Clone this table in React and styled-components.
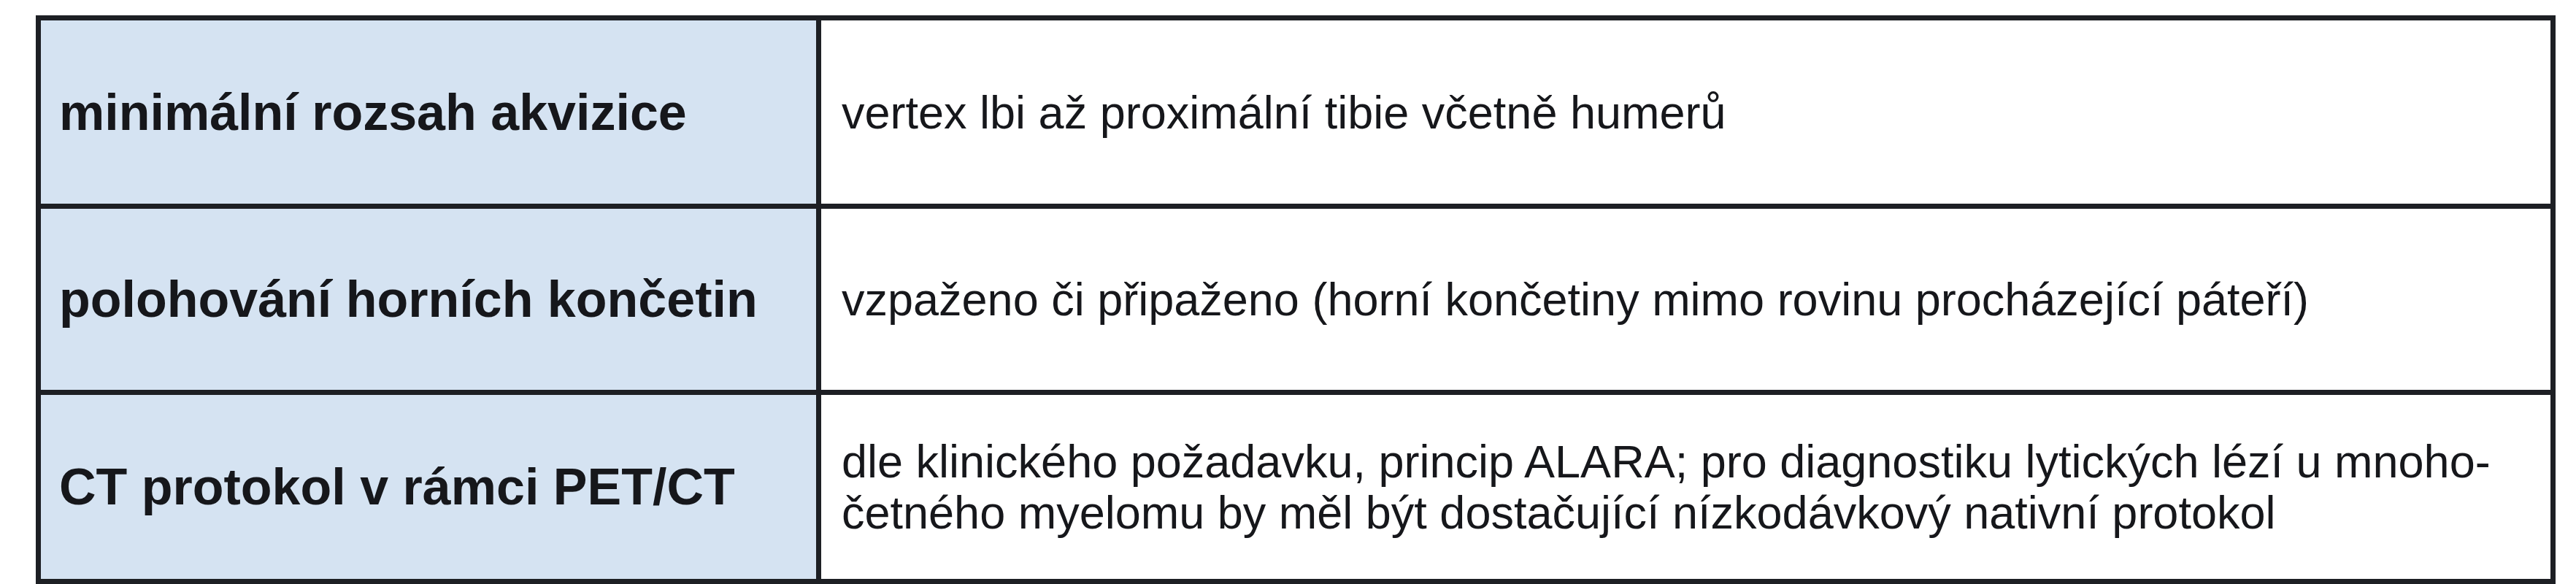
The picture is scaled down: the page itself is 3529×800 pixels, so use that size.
import React from 'react';
import styled, { createGlobalStyle } from 'styled-components';

const GlobalStyle = createGlobalStyle`
  html, body {
    margin: 0;
    padding: 0;
    background: #ffffff;
  }
  body {
    font-family: "Liberation Sans", Arial, sans-serif;
    color: #16171b;
  }
`;

const Page = styled.div`
  padding: 21px 0 0 49px;
  width: 3529px;
  height: 800px;
  box-sizing: border-box;
  overflow: hidden;
`;

const Table = styled.div`
  display: grid;
  grid-template-columns: 1062px 2369px;
  grid-template-rows: 251px 248px 252px;
  gap: 7px;
  padding: 7px;
  width: 3452px;
  box-sizing: border-box;
  background: #1d1f24;
`;

const Cell = styled.div`
  display: flex;
  align-items: center;
  box-sizing: border-box;
  background: ${(p) => (p.$head ? '#d5e3f2' : '#ffffff')};
  padding-left: ${(p) => (p.$head ? '25px' : '28px')};
  font-size: ${(p) => (p.$head ? '70px' : '63px')};
  font-weight: ${(p) => (p.$head ? 700 : 400)};
  line-height: 70px;
  white-space: nowrap;
`;

const rows = [
  {
    label: 'minimální rozsah akvizice',
    value: ['vertex lbi až proximální tibie včetně humerů'],
  },
  {
    label: 'polohování horních končetin',
    value: ['vzpaženo či připaženo (horní končetiny mimo rovinu procházející páteří)'],
  },
  {
    label: 'CT protokol v rámci PET/CT',
    value: [
      'dle klinického požadavku, princip ALARA; pro diagnostiku lytických lézí u mnoho-',
      'četného myelomu by měl být dostačující nízkodávkový nativní protokol',
    ],
  },
];

export default function App() {
  return (
    <>
      <GlobalStyle />
      <Page>
        <Table>
          {rows.map((row) => (
            <React.Fragment key={row.label}>
              <Cell $head>{row.label}</Cell>
              <Cell>
                <div>
                  {row.value.map((line, i) => (
                    <div key={i}>{line}</div>
                  ))}
                </div>
              </Cell>
            </React.Fragment>
          ))}
        </Table>
      </Page>
    </>
  );
}
